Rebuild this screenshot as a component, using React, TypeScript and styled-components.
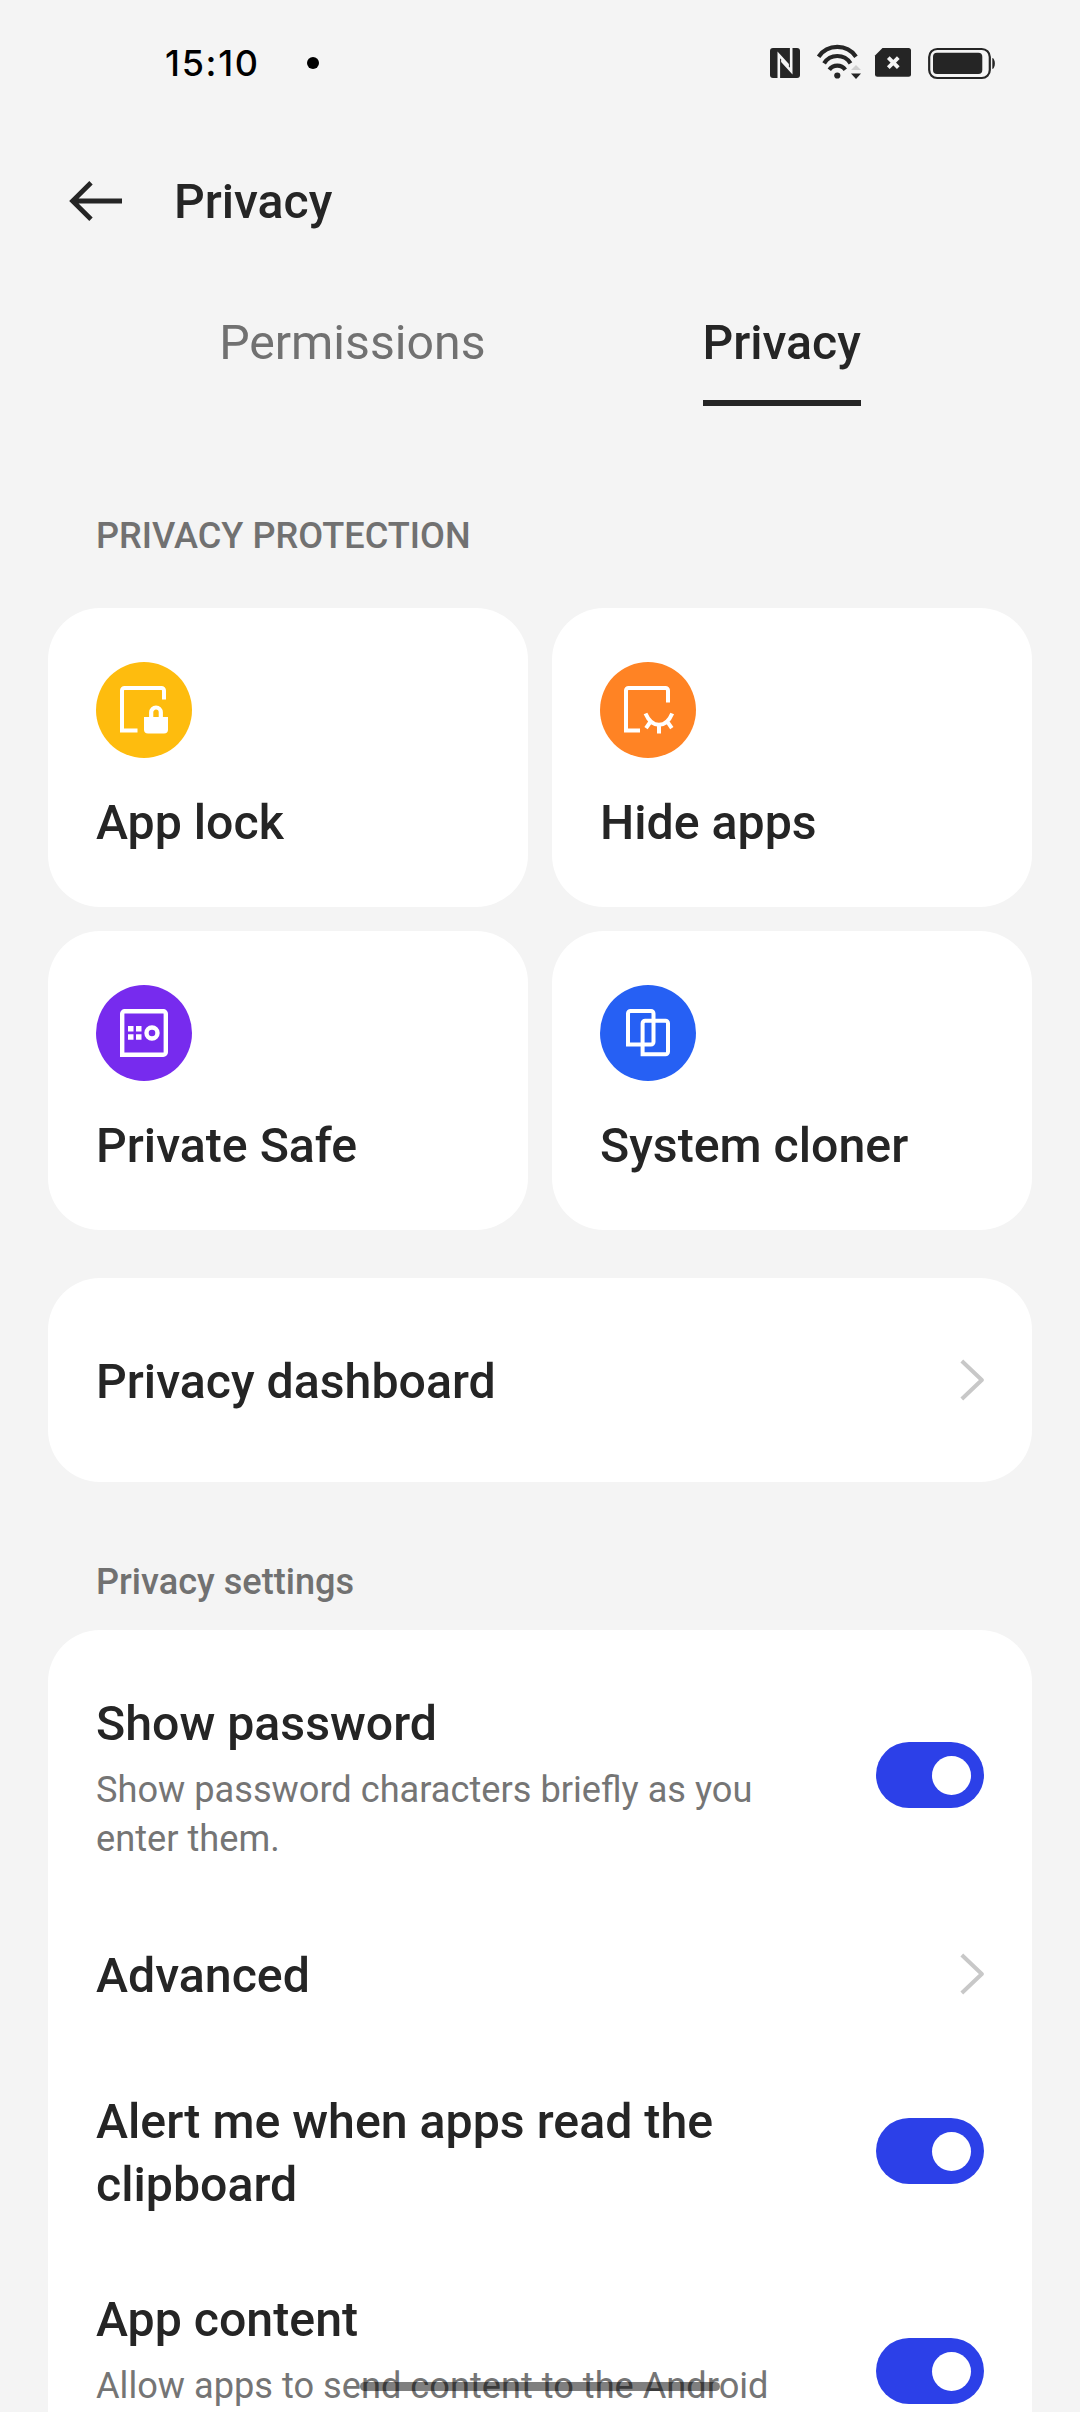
import React, { useState } from "react";
import styled, { createGlobalStyle } from "styled-components";

const GlobalStyle = createGlobalStyle`
  * { box-sizing: border-box; }
  html, body { margin: 0; padding: 0; background: #f4f4f4; }
  body { overflow: hidden; }
`;

const ink = "#252525";
const muted = "#717171";

const Screen = styled.div`
  position: relative;
  width: 1080px;
  height: 2412px;
  overflow: hidden;
  display: flex;
  flex-direction: column;
  background: #f4f4f4;
  color: ${ink};
  font-family: Roboto, "Noto Sans", sans-serif;
`;

const StatusBar = styled.div`
  height: 126px;
  flex: none;
  display: flex;
  align-items: center;
  padding: 0 82px 0 165px;
`;

const Clock = styled.span`
  font-family: Inter, Roboto, sans-serif;
  font-weight: 450;
  font-size: 36px;
  line-height: 48px;
  letter-spacing: 1.7px;
  color: #000;
`;

const Dot = styled.span`
  width: 12px;
  height: 12px;
  margin-left: 47px;
  border-radius: 50%;
  background: #000;
`;

const StatusIcons = styled.div`
  margin-left: auto;
  display: flex;
  align-items: center;
`;

const Header = styled.header`
  height: 150px;
  flex: none;
  display: flex;
  align-items: center;
  gap: 50px;
  padding-left: 68px;
`;

const BackButton = styled.button`
  display: flex;
  padding: 0;
  border: 0;
  background: none;
`;

const Title = styled.h1`
  margin: 0;
  padding-top: 2px;
  font-size: 48.200px;
  line-height: 56px;
  font-weight: 500;
`;

const Tabs = styled.nav`
  height: 130px;
  flex: none;
  display: flex;
  justify-content: center;
  gap: 217px;
  padding-top: 39px;
`;

const Tab = styled.button<{ $active?: boolean }>`
  height: 91px;
  padding: 0;
  border: 0;
  border-bottom: 6px solid ${(p) => (p.$active ? ink : "transparent")};
  background: none;
  display: flex;
  align-items: flex-start;
  font-family: inherit;
  font-size: 48.200px;
  line-height: 56px;
  font-weight: ${(p) => (p.$active ? 500 : 400)};
  color: ${(p) => (p.$active ? ink : muted)};
`;

const Content = styled.main`
  flex: 1;
  display: flex;
  flex-direction: column;
  padding: 0 48px;
`;

const SectionLabel = styled.h2<{ $top: number; $bottom: number }>`
  margin: 0;
  padding: ${(p) => p.$top}px 48px ${(p) => p.$bottom}px;
  font-size: 36.150px;
  line-height: 42px;
  font-weight: 500;
  color: ${muted};
`;

const Grid = styled.div`
  display: grid;
  grid-template-columns: 1fr 1fr;
  gap: 24px;
  flex: none;
`;

const Card = styled.section`
  border-radius: 52px;
  background: #fff;
`;

const Feature = styled(Card)`
  height: 299px;
  padding: 54px 48px 0;
  display: flex;
  flex-direction: column;
  gap: 30px;
`;

const Badge = styled.span<{ $color: string }>`
  width: 96px;
  height: 96px;
  border-radius: 50%;
  background: ${(p) => p.$color};
  display: flex;
`;

const RowTitle = styled.span`
  padding-top: 3px;
  font-size: 48.250px;
  line-height: 63px;
  font-weight: 500;
`;

const RowText = styled.span`
  min-height: 98px;
  font-size: 36.200px;
  line-height: 49px;
  color: #757575;
`;

const LinkCard = styled(Card)`
  height: 204px;
  flex: none;
  margin-top: 48px;
  padding: 0 48px;
  display: flex;
  align-items: center;
  justify-content: space-between;
`;

const List = styled(Card)`
  flex: none;
  padding: 48px 48px 0;
`;

const Row = styled.div<{ $height: number }>`
  height: ${(p) => p.$height}px;
  display: flex;
  align-items: center;
  justify-content: space-between;
`;

const RowBody = styled.div`
  width: 690px;
  display: flex;
  flex-direction: column;
  gap: 10px;
  padding-top: 1px;
`;

const Switch = styled.button<{ $on: boolean }>`
  width: 108px;
  height: 66px;
  flex: none;
  padding: 0 13px;
  border: 0;
  border-radius: 33px;
  background: ${(p) => (p.$on ? "#2c40e8" : "#d0d0d0")};
  display: flex;
  align-items: center;
  justify-content: ${(p) => (p.$on ? "flex-end" : "flex-start")};
`;

const Thumb = styled.span`
  width: 39px;
  height: 39px;
  border-radius: 50%;
  background: #fff;
`;

const HomeBar = styled.div`
  position: absolute;
  left: 360px;
  top: 2382px;
  width: 360px;
  height: 9px;
  border-radius: 5px;
  background: rgba(0, 0, 0, 0.5);
`;

const StatusGlyphs = () => (
  <svg width="232" height="40" viewBox="766 43 232 40" fill={ink}>
    <rect x="770" y="48" width="30" height="30" rx="3" />
    <g fill="none" stroke="#f4f4f4" strokeWidth="2.6">
      <path d="M778.800 78V54.800L787.600 64.600V66.500" />
      <path d="M791.200 48V71.200L782.400 61.400V59.500" />
    </g>
    <g fill="none" stroke={ink} strokeWidth="4.200">
      <path d="M818.600 56.700A22.800 22.800 0 0 1 856 56.700" />
      <path d="M824.100 63.300A15.600 15.600 0 0 1 850.500 63.300" />
      <path d="M829.300 69.700A10 10 0 0 1 845.300 69.700" />
    </g>
    <circle cx="837.300" cy="75.500" r="3.100" />
    <path d="M851 70l5-5 5 5z" fill="#cfcfcf" />
    <path d="M851 73.500h10l-5 5.500z" />
    <path d="M882.500 48H908.500a2.500 2.500 0 0 1 2.500 2.500V74.200a2.500 2.500 0 0 1-2.500 2.500H877.500a2.500 2.500 0 0 1-2.500-2.500V55.500z" />
    <path d="M888.300 57.700l10 10M898.300 57.700l-10 10" stroke="#f4f4f4" strokeWidth="3.800" />
    <rect x="929.200" y="49" width="60.600" height="29" rx="8" fill="none" stroke={ink} strokeWidth="2.200" />
    <rect x="933" y="52.800" width="49.300" height="21.200" rx="4" />
    <path d="M992.300 58c3.400 0.600 3.400 10.400 0 11z" />
  </svg>
);

const BackIcon = () => (
  <svg width="56" height="44" viewBox="68 179 56 44" fill="none" stroke={ink} strokeWidth="4.800">
    <path d="M122 201H73M91 182.800L72.600 201L91 219.200" />
  </svg>
);

const Chevron = () => (
  <svg width="24" height="42" viewBox="0 0 24 42" fill="none" stroke="#c8c8c8" strokeWidth="4" strokeLinejoin="round">
    <path d="M1.800 2L21.800 21L1.800 40" />
  </svg>
);

const icons: Record<string, React.ReactNode> = {
  lock: (
    <>
      <path d="M41.500 68.500H26V28.500a2.500 2.500 0 0 1 2.500-2.500H65.500a2.500 2.500 0 0 1 2.500 2.500V37.500" fill="none" stroke="#fff" strokeWidth="4" />
      <path d="M48 55H72V67.500a4 4 0 0 1-4 4H52a4 4 0 0 1-4-4z" fill="#fff" />
      <path d="M55.200 56V50.300a4.800 4.800 0 0 1 9.600 0V56" fill="none" stroke="#fff" strokeWidth="4.200" />
    </>
  ),
  hide: (
    <g fill="none" stroke="#fff" strokeWidth="4">
      <path d="M40 68.500H26V28.500a2.500 2.500 0 0 1 2.500-2.500H65.500a2.500 2.500 0 0 1 2.500 2.500V40.500" />
      <path d="M45.500 51.500C52 66.500 66 66.500 72.200 51.500M50.300 60L46 66.200M67.600 60L71.800 66.200M59 62.500V71.500" />
    </g>
  ),
  safe: (
    <>
      <path d="M26.200 69.800V28.700a2.500 2.500 0 0 1 2.500-2.500H67.300a2.500 2.500 0 0 1 2.500 2.500V67.300a2.500 2.500 0 0 1-2.500 2.500z" fill="none" stroke="#fff" strokeWidth="4.400" />
      <path d="M32 41h5.500v5.500H32zM40 41h5.500v5.500H40zM32 49.200h5.500v5.500H32zM40 49.200h5.500v5.500H40z" fill="#fff" />
      <circle cx="56" cy="48" r="5.500" fill="none" stroke="#fff" strokeWidth="4.400" />
    </>
  ),
  clone: (
    <g fill="none" stroke="#fff" strokeWidth="4">
      <path d="M28 59.500V28.500a2.500 2.500 0 0 1 2.500-2.500H51a2.500 2.500 0 0 1 2.500 2.500V57a2.500 2.500 0 0 1-2.500 2.500z" />
      <path d="M42.600 69.300V38.300a2.500 2.500 0 0 1 2.500-2.500H65.500a2.500 2.500 0 0 1 2.500 2.500V66.800a2.500 2.500 0 0 1-2.500 2.500z" />
    </g>
  ),
};

const features = [
  { icon: "lock", color: "#febc0e", label: "App lock" },
  { icon: "hide", color: "#ff8324", label: "Hide apps" },
  { icon: "safe", color: "#772bee", label: "Private Safe" },
  { icon: "clone", color: "#2660f4", label: "System cloner" },
];

function Toggle() {
  const [on, setOn] = useState(true);
  return (
    <Switch $on={on} role="switch" aria-checked={on} onClick={() => setOn(!on)}>
      <Thumb />
    </Switch>
  );
}

export default function App() {
  return (
    <>
      <GlobalStyle />
      <Screen>
        <StatusBar>
          <Clock>15:10</Clock>
          <Dot />
          <StatusIcons>
            <StatusGlyphs />
          </StatusIcons>
        </StatusBar>
        <Header>
          <BackButton>
            <BackIcon />
          </BackButton>
          <Title>Privacy</Title>
        </Header>
        <Tabs>
          <Tab>Permissions</Tab>
          <Tab $active>Privacy</Tab>
        </Tabs>
        <Content>
          <SectionLabel $top={109} $bottom={51}>PRIVACY PROTECTION</SectionLabel>
          <Grid>
            {features.map((f) => (
              <Feature key={f.icon}>
                <Badge $color={f.color}>
                  <svg width="96" height="96" viewBox="0 0 96 96">{icons[f.icon]}</svg>
                </Badge>
                <RowTitle>{f.label}</RowTitle>
              </Feature>
            ))}
          </Grid>
          <LinkCard>
            <RowTitle>Privacy dashboard</RowTitle>
            <Chevron />
          </LinkCard>
          <SectionLabel $top={79} $bottom={27}>Privacy settings</SectionLabel>
          <List>
            <Row $height={194}>
              <RowBody>
                <RowTitle>Show password</RowTitle>
                <RowText>Show password characters briefly as you enter them.</RowText>
              </RowBody>
              <Toggle />
            </Row>
            <Row $height={204}>
              <RowTitle>Advanced</RowTitle>
              <Chevron />
            </Row>
            <Row $height={150}>
              <RowBody>
                <RowTitle>Alert me when apps read the clipboard</RowTitle>
              </RowBody>
              <Toggle />
            </Row>
            <Row $height={290}>
              <RowBody>
                <RowTitle>App content</RowTitle>
                <RowText>Allow apps to send content to the Android</RowText>
              </RowBody>
              <Toggle />
            </Row>
          </List>
        </Content>
        <HomeBar />
      </Screen>
    </>
  );
}
